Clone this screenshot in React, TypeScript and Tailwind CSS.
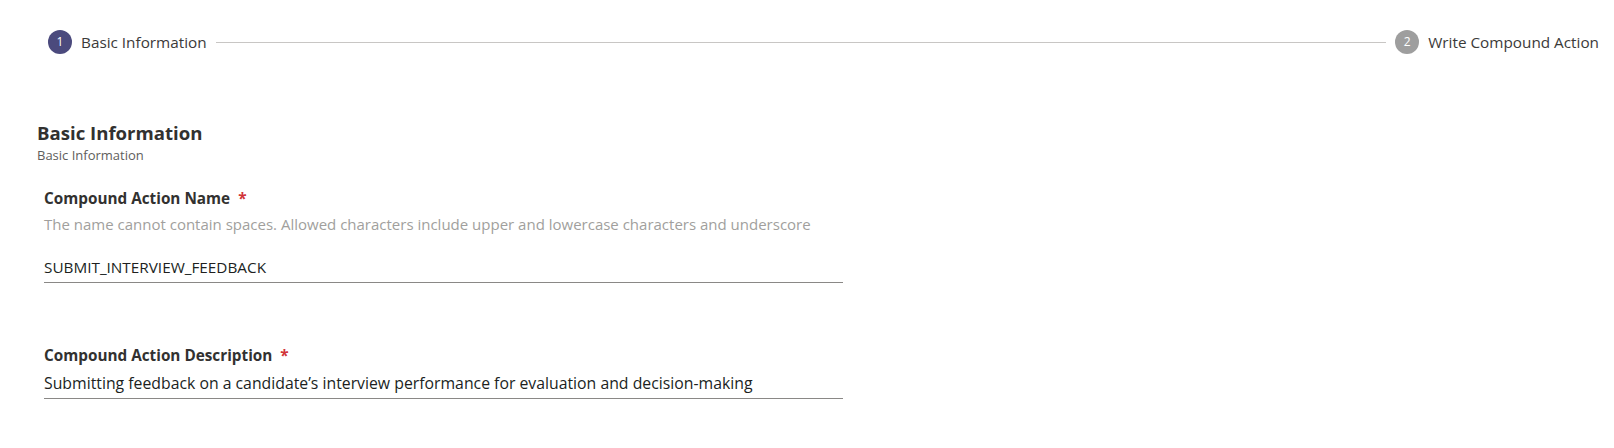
const FONT = "font-['Open_Sans','Noto_Sans',sans-serif]";

type StepProps = {
  index: number;
  label: string;
  active?: boolean;
};

const Step = ({ index, label, active }: StepProps) => (
  <div className="flex items-center gap-[9px] shrink-0">
    <div
      className={`flex items-center justify-center w-6 h-6 rounded-full text-white text-[12px] ${
        active ? "bg-[#4b4a7d]" : "bg-[#9e9e9e]"
      }`}
    >
      {index}
    </div>
    <span className="text-[15.3px] leading-5 text-[#3b3a39]">{label}</span>
  </div>
);

export default function App() {
  return (
    <div className={`w-[1614px] h-[448px] bg-white ${FONT}`}>
      <div className="flex items-center gap-2 pt-[30px] pl-[48px] pr-[15px]">
        <Step index={1} label="Basic Information" active />
        <div className="flex-1 h-px bg-[#c8c6c4] mx-px" />
        <Step index={2} label="Write Compound Action" />
      </div>

      <div className="pl-[37px] mt-[67px]">
        <h2 className="text-[18.6px] leading-6 font-bold text-[#323130]">Basic Information</h2>
        <p className="mt-[2px] text-[13px] leading-4 text-[#605e5c]">Basic Information</p>

        <div className="pl-[7px] mt-[25px] w-[806px]">
          <p className="text-[15.3px] leading-5 font-bold text-[#323130]">
            Compound Action Name
            <span className="ml-2 text-[#d13438]">*</span>
          </p>
          <p className="mt-[6px] text-[15px] leading-5 text-[#a19f9d]">
            The name cannot contain spaces. Allowed characters include upper and lowercase characters and underscore
          </p>
          <div className="mt-[23px] pb-[5px] border-b border-[#8a8886] text-[15.3px] leading-5 text-[#201f1e]">
            SUBMIT_INTERVIEW_FEEDBACK
          </div>

          <p className="mt-[62px] text-[15.3px] leading-5 font-bold text-[#323130]">
            Compound Action Description
            <span className="ml-2 text-[#d13438]">*</span>
          </p>
          <div className="mt-[7px] pb-[4px] border-b border-[#8a8886] text-[15.8px] leading-[22px] text-[#201f1e]">
            Submitting feedback on a candidate’s interview performance for evaluation and decision-making
          </div>
        </div>
      </div>
    </div>
  );
}
